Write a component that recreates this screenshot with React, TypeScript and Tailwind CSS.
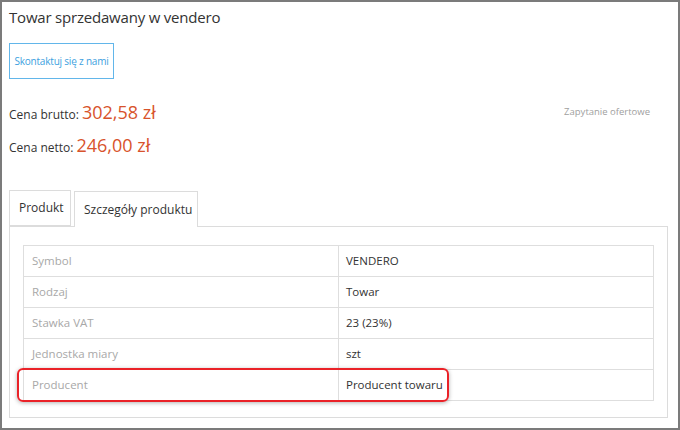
import React from "react";

const rows: [string, string][] = [
  ["Symbol", "VENDERO"],
  ["Rodzaj", "Towar"],
  ["Stawka VAT", "23 (23%)"],
  ["Jednostka miary", "szt"],
  ["Producent", "Producent towaru"],
];

const App: React.FC = () => {
  return (
    <div
      className="w-[680px] h-[430px] border-2 border-[#7b7b7b] bg-white text-[#333] overflow-hidden"
      style={{ fontFamily: '"Open Sans", "Noto Sans", sans-serif' }}
    >
      <div className="pl-[7px] pr-[10px] pt-[5px]">
        {/* Header */}
        <h1 className="text-[15px] leading-[20px] tracking-[-0.2px]">Towar sprzedawany w vendero</h1>

        <button className="mt-[16px] w-[105px] h-[36px] border border-[#62b6ea] text-[10px] text-[#3d9fe0] tracking-[-0.2px]">
          Skontaktuj się z nami
        </button>

        {/* Prices */}
        <div className="mt-[20px] flex items-start justify-between">
          <div className="flex flex-col gap-[9px]">
            <div className="flex items-baseline gap-[3px] h-[24px]">
              <span className="text-[12px]">Cena brutto:</span>
              <span className="text-[18px] text-[#d8532c]">302,58 zł</span>
            </div>
            <div className="flex items-baseline gap-[3px] h-[24px]">
              <span className="text-[12px]">Cena netto:</span>
              <span className="text-[18px] text-[#d8532c]">246,00 zł</span>
            </div>
          </div>
          <span className="mt-[6px] mr-[18px] text-[9.5px] text-[#a0a0a0]">Zapytanie ofertowe</span>
        </div>

        {/* Tabs */}
        <div className="mt-[34px] flex gap-[3px] items-end">
          <div className="w-[62px] h-[36px] border border-[#dcdcdc] flex items-center pl-[9px] text-[12px]">
            Produkt
          </div>
          <div className="w-[124px] h-[36px] border border-b-0 border-[#dcdcdc] bg-white flex items-center pl-[9px] text-[12px] relative z-10 -mb-px">
            Szczegóły produktu
          </div>
        </div>

        {/* Panel */}
        <div className="w-[659px] h-[192px] border border-[#dcdcdc] px-[13px] pt-[18px]">
          <div className="relative">
            <table className="w-[631px] border-collapse text-[11.5px]">
              <tbody>
                {rows.map(([k, v]) => (
                  <tr key={k} className="h-[31px]">
                    <td className="w-[315px] border border-[#dedede] pl-[8px] text-[#a8a8a8]">{k}</td>
                    <td className="border border-[#dedede] pl-[7px]">{v}</td>
                  </tr>
                ))}
              </tbody>
            </table>
            <div className="absolute left-[-6px] top-[123px] w-[432px] h-[34px] border-2 border-[#ea2228] rounded-[6px] shadow-[0_1px_4px_rgba(0,0,0,0.3)] pointer-events-none" />
          </div>
        </div>
      </div>
    </div>
  );
};

export default App;
